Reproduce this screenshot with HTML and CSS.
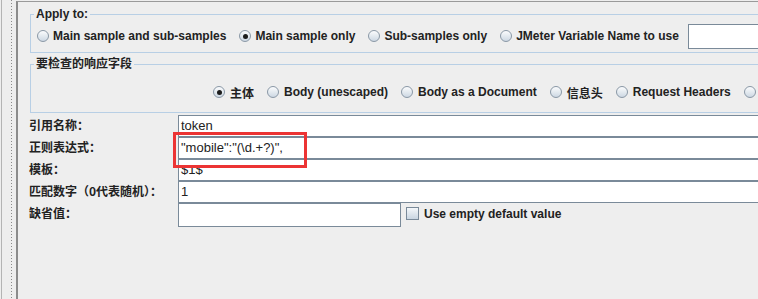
FILE: index.html
```html
<!DOCTYPE html>
<html>
<head>
<meta charset="utf-8">
<link rel="stylesheet" href="styles.css">
</head>
<body>
<div class="screen">
  <div class="divider"></div>
  <div class="panel">
    <fieldset class="group group-apply">
      <legend>Apply to:</legend>
      <div class="radios radios-apply">
        <label class="radio"><span class="dot"></span>Main sample and sub-samples</label>
        <label class="radio on"><span class="dot"></span>Main sample only</label>
        <label class="radio"><span class="dot"></span>Sub-samples only</label>
        <label class="radio"><span class="dot"></span>JMeter Variable Name to use</label>
        <span class="field var-field"></span>
      </div>
    </fieldset>
    <fieldset class="group group-fields">
      <legend>要检查的响应字段</legend>
      <div class="radios radios-fields">
        <label class="radio on"><span class="dot"></span>主体</label>
        <label class="radio"><span class="dot"></span>Body (unescaped)</label>
        <label class="radio"><span class="dot"></span>Body as a Document</label>
        <label class="radio"><span class="dot"></span>信息头</label>
        <label class="radio"><span class="dot"></span>Request Headers</label>
        <label class="radio"><span class="dot"></span></label>
      </div>
    </fieldset>
    <div class="form">
      <div class="lbl">引用名称：</div><div class="field">token</div>
      <div class="lbl">正则表达式：</div><div class="field">"mobile":"(\d.+?)",</div>
      <div class="lbl">模板：</div><div class="field">$1$</div>
      <div class="lbl">匹配数字（0代表随机）：</div><div class="field">1</div>
      <div class="lbl">缺省值：</div>
      <div class="default-row">
        <div class="field field-short"></div>
        <label class="check"><span class="box"></span>Use empty default value</label>
      </div>
    </div>
  </div>
  <div class="highlight"></div>
</div>
</body>
</html>
```
FILE: styles.css
```css
html, body {
  margin: 0;
  padding: 0;
  background: #eeeeee;
}
.screen {
  position: relative;
  width: 758px;
  height: 299px;
  overflow: hidden;
  display: flex;
  background: #eeeeee;
  font-family: "Liberation Sans", "Noto Sans CJK SC", sans-serif;
  color: #222;
}
.divider {
  flex: none;
  width: 14px;
  margin-left: 1px;
  border-left: 1px solid #b4b4b4;
  background-image: repeating-linear-gradient(to bottom, #8a8a8a 0 1px, transparent 1px 3px);
  background-size: 1px 100%;
  background-position: 9px 0;
  background-repeat: no-repeat;
}
.panel {
  flex: none;
  width: 800px;
  margin-top: 1px;
  border-left: 2px solid #8c8c8c;
  border-top: 1px solid #9a9a9a;
}
.group {
  margin: 0 0 0 12px;
  padding: 0;
  border: 1px solid #b8cfe5;
  min-width: 0;
}
.group legend {
  margin-left: 3px;
  padding: 0 2px;
  font-size: 12px;
  line-height: 14px;
  font-weight: bold;
  color: #222;
}
.group-apply {
  margin-top: 5px;
}
.group-fields {
  margin-top: 4px;
}
.radios {
  display: flex;
  align-items: center;
  height: 20px;
  gap: 14px;
  white-space: nowrap;
}
.radios-apply {
  padding: 5px 0 6px 6px;
  gap: 13px;
}
.radios-fields {
  padding: 11px 0 10px 182px;
  gap: 13px;
}
.radio {
  display: flex;
  align-items: center;
  font-size: 12px;
  font-weight: bold;
  color: #222;
}
.dot {
  flex: none;
  box-sizing: border-box;
  width: 12px;
  height: 12px;
  margin-right: 4px;
  border: 1px solid #8a98a6;
  border-radius: 50%;
  background: linear-gradient(#fbfcfd, #cdd8e3);
  display: flex;
  align-items: center;
  justify-content: center;
}
.radios-fields .dot {
  margin-right: 5px;
}
.on .dot::after {
  content: "";
  width: 5px;
  height: 5px;
  border-radius: 50%;
  background: #1c1c1c;
}
.field {
  box-sizing: border-box;
  height: 22px;
  background: #fff;
  border: 1px solid #7a8a99;
  border-right: none;
  padding-left: 2px;
  font-size: 13px;
  line-height: 19px;
  color: #222;
  white-space: nowrap;
}
.var-field {
  flex: none;
  width: 100px;
  height: 25px;
  margin-left: -4px;
}
.form {
  margin-top: 2px;
  padding-left: 11px;
  display: grid;
  grid-template-columns: 149px 1fr;
  grid-auto-rows: 22px;
}
.lbl {
  font-family: "Noto Sans CJK SC", sans-serif;
  font-size: 12px;
  font-weight: bold;
  line-height: 20px;
  color: #222;
  white-space: nowrap;
}
.default-row {
  display: flex;
  align-items: center;
  padding-top: 1px;
}
.field-short {
  width: 223px;
  height: 24px;
  border-right: 1px solid #7a8a99;
  flex: none;
}
.check {
  display: flex;
  align-items: center;
  margin-left: 5px;
  margin-top: -2px;
  font-size: 12px;
  font-weight: bold;
  color: #222;
}
.box {
  box-sizing: border-box;
  width: 13px;
  height: 13px;
  margin-right: 5px;
  border: 1px solid #7a8a99;
  background: linear-gradient(#f4f7fa, #c9d5e1);
}
.highlight {
  position: absolute;
  left: 173px;
  top: 132px;
  width: 134px;
  height: 36px;
  box-sizing: border-box;
  border: 3px solid #ec3434;
}
```
